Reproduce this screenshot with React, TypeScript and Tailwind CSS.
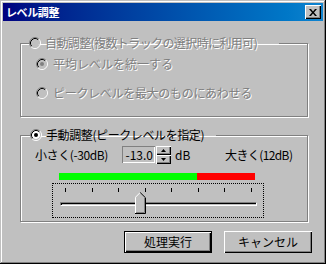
import React from "react";

const font = "font-['Noto_Sans_CJK_JP',sans-serif]";

function Radio({ checked, disabled }: { checked?: boolean; disabled?: boolean }) {
  return (
    <svg width="12" height="12" viewBox="0 0 12 12" className="shrink-0">
      <circle cx="6" cy="6" r="4" fill={disabled ? "#c0c0c0" : "#fff"} />
      <path d="M2.11 9.89A5.5 5.5 0 0 1 9.89 2.11" stroke="#808080" fill="none" />
      <path d="M9.89 2.11A5.5 5.5 0 0 1 2.11 9.89" stroke="#fff" fill="none" />
      <path d="M2.82 9.18A4.5 4.5 0 0 1 9.18 2.82" stroke="#000" fill="none" />
      <path d="M9.18 2.82A4.5 4.5 0 0 1 2.82 9.18" stroke="#c0c0c0" fill="none" />
      {checked && <circle cx="6" cy="6" r="2" fill={disabled ? "#808080" : "#000"} />}
    </svg>
  );
}

const disabledText = "text-[#808080] [text-shadow:1px_1px_0_#fff]";
const etched = "border border-[#808080] shadow-[inset_1px_1px_#fff,1px_1px_#fff]";

function SpinButton({ up }: { up?: boolean }) {
  return (
    <div className="w-[15px] h-[9px] bg-[#c0c0c0] flex items-center justify-center shadow-[inset_1px_1px_#fff,inset_-1px_-1px_#000,inset_-2px_-2px_#808080]">
      <svg width="5" height="3" viewBox="0 0 5 3">
        {up ? <path d="M2.5 0L5 3H0z" fill="#000" /> : <path d="M0 0H5L2.5 3z" fill="#000" />}
      </svg>
    </div>
  );
}

function Thumb() {
  return (
    <svg width="11" height="22" viewBox="0 0 11 22">
      <path d="M0 5L5 0L10 5V21H0z" fill="#c0c0c0" />
      <path d="M0.5 21V5.2L5 0.7" stroke="#fff" fill="none" />
      <path d="M5.2 0.5L10.5 5.8V21.5H0" stroke="#000" fill="none" />
      <path d="M9.5 6V20.5H1" stroke="#808080" fill="none" />
    </svg>
  );
}

export default function App() {
  const ticks = [0, 1, 2, 3, 4, 5, 6, 7];
  return (
    <div
      className={`${font} w-[326px] h-[264px] bg-[#c0c0c0] p-[3px] text-[12px] leading-[14px] text-black shadow-[inset_-1px_-1px_#000,inset_1px_1px_#c0c0c0,inset_-2px_-2px_#808080,inset_2px_2px_#fff]`}
    >
      {/* title bar */}
      <div className="h-[18px] flex items-start justify-between bg-gradient-to-r from-[#000080] to-[#1084d0] pl-[3px] pr-[2px]">
        <span className="text-white font-bold text-[11px] tracking-[-0.4px] leading-[18px]">レベル調整</span>
        <div className="mt-[2px] w-[16px] h-[14px] bg-[#c0c0c0] flex items-center justify-center shadow-[inset_1px_1px_#fff,inset_-1px_-1px_#000,inset_-2px_-2px_#808080]">
          <svg width="8" height="7" viewBox="0 0 8 7">
            <path d="M0 0h2l2 2.5L6 0h2L5 3.5L8 7H6L4 4.5L2 7H0l3-3.5z" fill="#000" />
          </svg>
        </div>
      </div>

      {/* auto group */}
      <fieldset className={`${etched} ml-[17px] mt-[15px] w-[288px] pb-[16px]`}>
        <legend className="ml-[8px] pr-[22px] h-[14px] flex items-center gap-[4px]">
          <Radio disabled />
          <span className={`${disabledText} tracking-[-0.6px]`}>自動調整(複数トラックの選択時に利用可)</span>
        </legend>
        <div className="ml-[15px] mt-[7px] h-[14px] flex items-center gap-[5px]">
          <Radio checked disabled />
          <span className={disabledText}>平均レベルを統一する</span>
        </div>
        <div className="ml-[15px] mt-[15px] h-[14px] flex items-center gap-[5px]">
          <Radio disabled />
          <span className={`${disabledText} tracking-[-0.3px]`}>ピークレベルを最大のものにあわせる</span>
        </div>
      </fieldset>

      {/* manual group */}
      <fieldset className={`${etched} ml-[17px] mt-[11px] w-[288px] pb-[3px]`}>
        <legend className="ml-[9px] pr-[12px] h-[14px] flex items-center gap-[4px]">
          <Radio checked />
          <span className="tracking-[-0.4px]">手動調整(ピークレベルを指定)</span>
        </legend>
        <div className="ml-[14px] mt-[4px] h-[17px] flex items-center">
          <span className="w-[87px] tracking-[-0.4px]">小さく(-30dB)</span>
          <div className="w-[33px] h-[17px] border-t border-l border-[#808080] shadow-[inset_-1px_-1px_#fff] flex items-center justify-end pr-[2px]">
            -13.0
          </div>
          <div className="ml-[1px] flex flex-col">
            <SpinButton up />
            <SpinButton />
          </div>
          <span className="ml-[4px] w-[50px]">dB</span>
          <span className="tracking-[-0.6px]">大きく(12dB)</span>
        </div>
        <div className="ml-[38px] mt-[10px] h-[7px] flex">
          <div className="w-[138px] bg-[#00ff00]" />
          <div className="w-[58px] bg-[#ff0000]" />
        </div>
        <div className="relative ml-[31px] mt-[3px] w-[212px] h-[35px] border border-dotted border-black">
          <div className="ml-[12px] mt-[4px] w-[187px] h-[4px] flex justify-between">
            {ticks.map((t) => (
              <div key={t} className="w-[1px] h-[4px] bg-black" />
            ))}
          </div>
          <div className="ml-[7px] mt-[10px] w-[197px] h-[4px] bg-[#c0c0c0] border-t border-l border-[#808080] border-b border-r border-b-white border-r-white shadow-[inset_1px_1px_#000]" />
          <div className="absolute left-[82px] top-[8px]">
            <Thumb />
          </div>
        </div>
      </fieldset>

      {/* buttons */}
      <div className="mt-[9px] ml-[121px] flex gap-[12px]">
        <button className="w-[88px] h-[22px] border border-black bg-[#c0c0c0] shadow-[inset_1px_1px_#fff,inset_-1px_-1px_#000,inset_-2px_-2px_#808080] text-[12px]">
          処理実行
        </button>
        <button className="w-[88px] h-[22px] bg-[#c0c0c0] shadow-[inset_1px_1px_#fff,inset_-1px_-1px_#000,inset_-2px_-2px_#808080] text-[12px]">
          キャンセル
        </button>
      </div>
    </div>
  );
}
